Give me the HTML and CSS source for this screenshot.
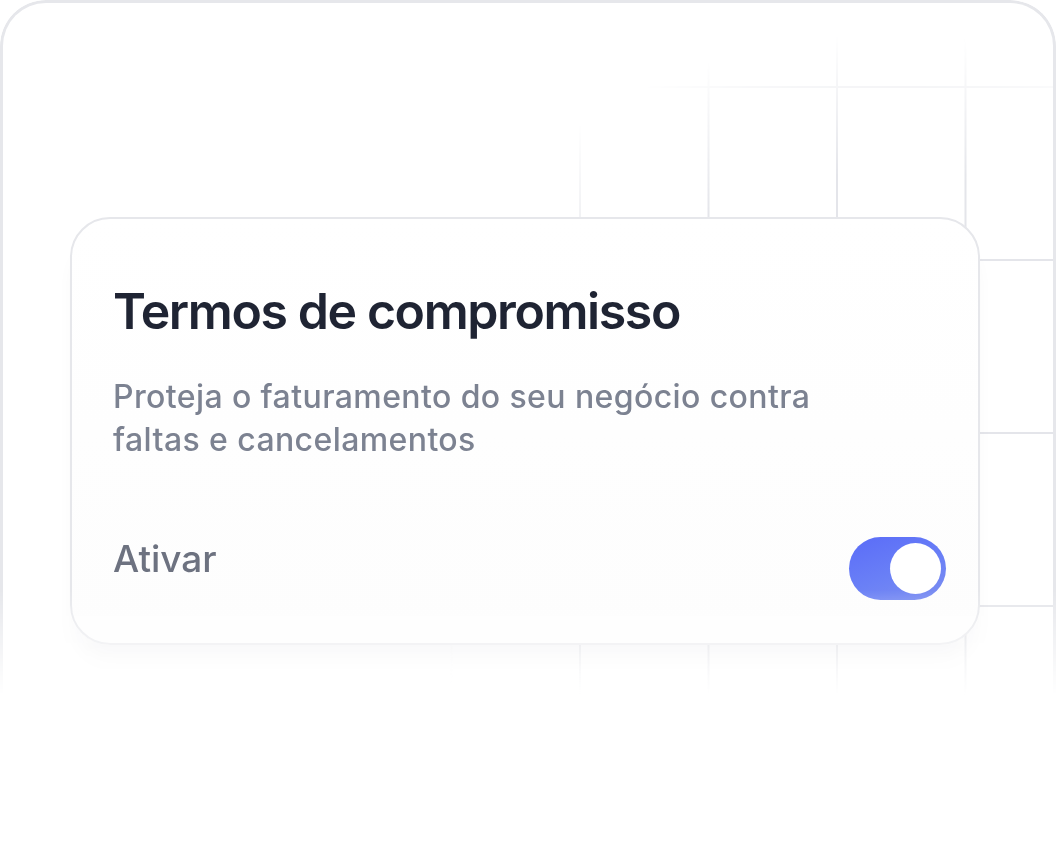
FILE: index.html
```html
<!DOCTYPE html>
<html lang="pt-BR">
<head>
  <meta charset="UTF-8" />
  <title>Termos de compromisso</title>
  <meta name="viewport" content="width=device-width, initial-scale=1.0" />
  <link rel="stylesheet" href="styles.css">
</head>
<body>
  <div class="stage">
    <div class="panel">
      <!-- card -->
      <div class="card">
        <h1 class="card-title">Termos de compromisso</h1>
        <p class="card-text">Proteja o faturamento do seu negócio contra faltas e cancelamentos</p>
        <div class="card-row">
          <span class="row-label">Ativar</span>
          <span class="toggle on" role="switch" aria-checked="true"><span class="knob"></span></span>
        </div>
      </div>
    </div>
  </div>
</body>
</html>
```

FILE: styles.css
```css
* { box-sizing: border-box; }
body { margin: 0; background: #fff; font-family: Inter, "Noto Sans", sans-serif; }

.stage { width: 1056px; height: 864px; overflow: hidden; }

.panel {
  position: relative;
  width: 1056px;
  height: 700px;
  padding-top: 214px;
  padding-left: 67px;
  border: 3px solid #e6e7eb;
  border-bottom: 0;
  border-radius: 46px 46px 0 0;
  -webkit-mask-image: linear-gradient(to bottom, #000 590px, transparent 695px);
  mask-image: linear-gradient(to bottom, #000 590px, transparent 695px);
}

/* faint grid behind the card */
.panel::before {
  content: "";
  position: absolute;
  inset: 0;
  background-image:
    linear-gradient(to right, #e4e5ea 2px, transparent 2px),
    linear-gradient(to bottom, #e4e5ea 2px, transparent 2px);
  background-size: 128.5px 173px;
  background-position: 62px 83px;
  -webkit-mask-image: radial-gradient(ellipse 500px 440px at 880px 470px, #000 68%, transparent 100%);
  mask-image: radial-gradient(ellipse 500px 440px at 880px 470px, #000 68%, transparent 100%);
}

.card {
  position: relative;
  width: 910px;
  height: 428px;
  padding: 62px 32px 0 41px;
  background: linear-gradient(#fff, #fdfdfd);
  border: 2px solid #e6e7eb;
  border-radius: 40px;
  box-shadow: 0 22px 22px -8px rgba(30, 40, 50, 0.06);
}

.card-title {
  margin: 0;
  font-size: 50px;
  line-height: 60px;
  font-weight: 600;
  letter-spacing: -1.4px;
  color: #1f2433;
}

.card-text {
  margin: 34px 0 0;
  max-width: 740px;
  font-size: 32px;
  line-height: 43px;
  font-weight: 500;
  letter-spacing: 0.4px;
  color: #7c8291;
}

.card-row {
  display: flex;
  justify-content: space-between;
  align-items: flex-start;
  margin-top: 76px;
}

.row-label {
  font-size: 37px;
  line-height: 44px;
  font-weight: 500;
  color: #6d7280;
}

.toggle {
  display: flex;
  justify-content: flex-end;
  width: 97px;
  height: 63px;
  padding: 6px 5px;
  border-radius: 32px;
  background: linear-gradient(160deg, #5a6cf8 0%, #6a80f6 55%, #7d8ff0 100%);
}

.knob {
  width: 51px;
  height: 51px;
  border-radius: 50%;
  background: #fff;
}
```
